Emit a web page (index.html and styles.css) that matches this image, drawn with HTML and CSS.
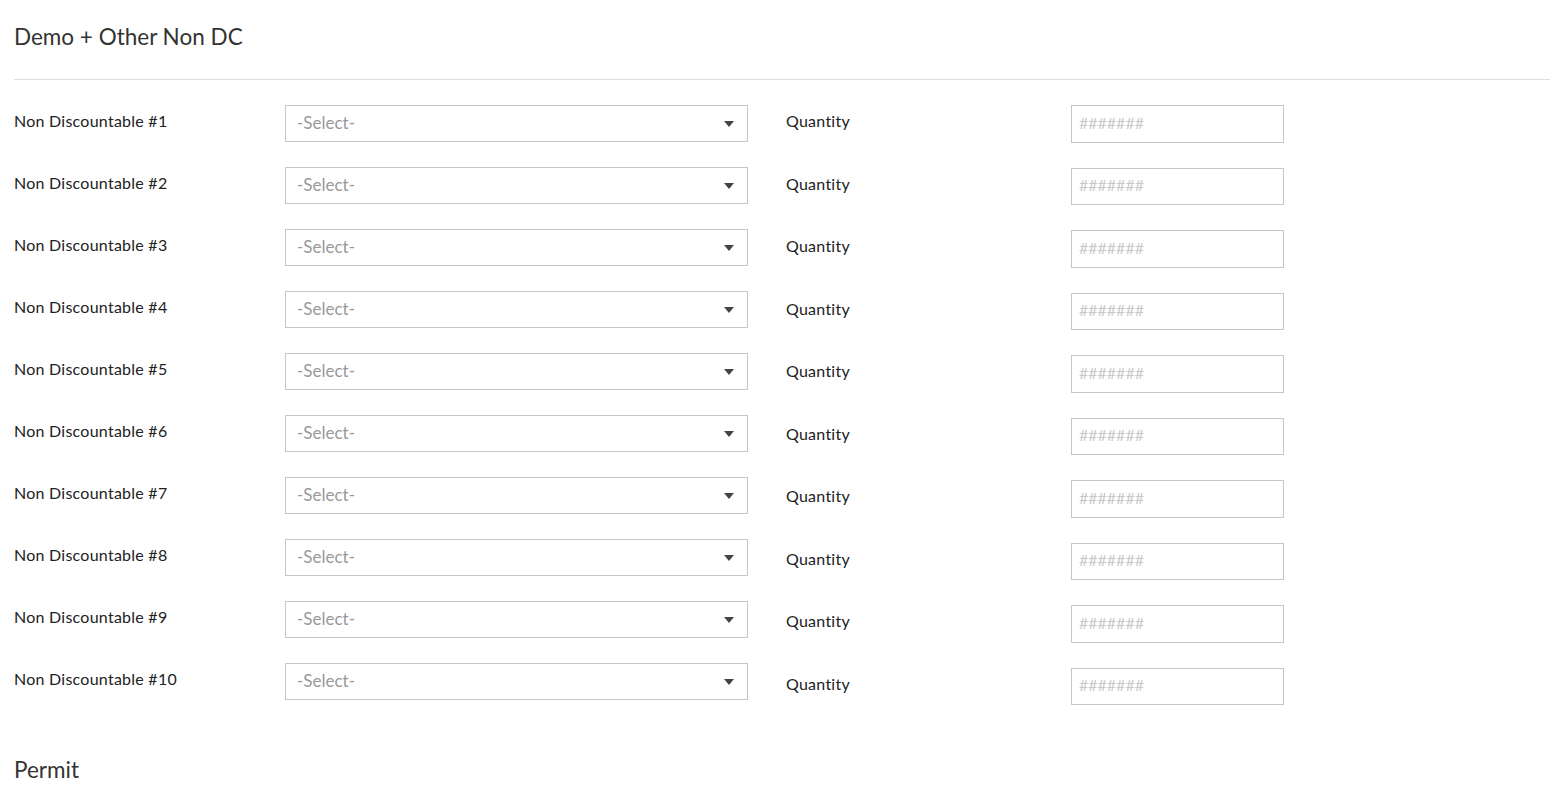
FILE: index.html
```html
<!DOCTYPE html>
<html>
<head>
<meta charset="utf-8">
<link rel="stylesheet" href="styles.css">
</head>
<body>
<div class="page">
  <h2 class="section-title">Demo + Other Non DC</h2>
  <div class="divider"></div>
  <div class="form">
    <div class="col col-left">
      <div class="row"><div class="label">Non Discountable #1</div><div class="select"><span>-Select-</span><i class="caret"></i></div></div>
      <div class="row"><div class="label">Non Discountable #2</div><div class="select"><span>-Select-</span><i class="caret"></i></div></div>
      <div class="row"><div class="label">Non Discountable #3</div><div class="select"><span>-Select-</span><i class="caret"></i></div></div>
      <div class="row"><div class="label">Non Discountable #4</div><div class="select"><span>-Select-</span><i class="caret"></i></div></div>
      <div class="row"><div class="label">Non Discountable #5</div><div class="select"><span>-Select-</span><i class="caret"></i></div></div>
      <div class="row"><div class="label">Non Discountable #6</div><div class="select"><span>-Select-</span><i class="caret"></i></div></div>
      <div class="row"><div class="label">Non Discountable #7</div><div class="select"><span>-Select-</span><i class="caret"></i></div></div>
      <div class="row"><div class="label">Non Discountable #8</div><div class="select"><span>-Select-</span><i class="caret"></i></div></div>
      <div class="row"><div class="label">Non Discountable #9</div><div class="select"><span>-Select-</span><i class="caret"></i></div></div>
      <div class="row"><div class="label">Non Discountable #10</div><div class="select"><span>-Select-</span><i class="caret"></i></div></div>
    </div>
    <div class="col col-right">
      <div class="row row-q"><div class="label qlabel">Quantity</div><input class="qty" type="text" placeholder="#######"></div>
      <div class="row row-q"><div class="label qlabel">Quantity</div><input class="qty" type="text" placeholder="#######"></div>
      <div class="row row-q"><div class="label qlabel">Quantity</div><input class="qty" type="text" placeholder="#######"></div>
      <div class="row row-q"><div class="label qlabel">Quantity</div><input class="qty" type="text" placeholder="#######"></div>
      <div class="row row-q"><div class="label qlabel">Quantity</div><input class="qty" type="text" placeholder="#######"></div>
      <div class="row row-q"><div class="label qlabel">Quantity</div><input class="qty" type="text" placeholder="#######"></div>
      <div class="row row-q"><div class="label qlabel">Quantity</div><input class="qty" type="text" placeholder="#######"></div>
      <div class="row row-q"><div class="label qlabel">Quantity</div><input class="qty" type="text" placeholder="#######"></div>
      <div class="row row-q"><div class="label qlabel">Quantity</div><input class="qty" type="text" placeholder="#######"></div>
      <div class="row row-q"><div class="label qlabel">Quantity</div><input class="qty" type="text" placeholder="#######"></div>
    </div>
  </div>
  <h2 class="section-title permit">Permit</h2>
</div>
</body>
</html>
```
FILE: styles.css
```css
html, body {
  margin: 0;
  padding: 0;
  background: #fff;
}
body {
  font-family: Lato, "Open Sans", sans-serif;
  color: #222;
  overflow: hidden;
  font-variant-ligatures: none;
}
.page {
  padding-left: 14px;
}
.section-title {
  margin: 0;
  font-weight: 400;
  font-size: 22.5px;
  line-height: 28px;
  color: #333;
  padding-top: 23px;
}
.divider {
  height: 1px;
  background: #dedede;
  margin-top: 28px;
}
.form {
  display: flex;
  margin-top: 25px;
}
.col {
  display: flex;
  flex-direction: column;
}
.row {
  display: flex;
  align-items: flex-start;
  height: 37px;
  margin-bottom: 25px;
}
.row-q {
  height: 37.5px;
}
.label {
  width: 271px;
  font-size: 16px;
  letter-spacing: 0.25px;
  line-height: 20px;
  padding-top: 6px;
  color: #222;
}
.qlabel {
  width: 285px;
}
.col-right {
  margin-left: 38px;
}
.select {
  box-sizing: border-box;
  width: 463px;
  height: 37px;
  border: 1px solid #c6c6c6;
  display: flex;
  align-items: center;
  justify-content: space-between;
  padding: 0 13px 0 11px;
  font-size: 17px;
  color: #999;
}
.select span {
  margin-top: -2px;
}
.caret {
  width: 0;
  height: 0;
  border-left: 5px solid transparent;
  border-right: 5px solid transparent;
  border-top: 6px solid #444;
}
.qty {
  box-sizing: border-box;
  width: 213px;
  height: 37.5px;
  border: 1px solid #c6c6c6;
  margin: 0;
  padding: 0 7px 3px;
  font-family: Lato, "Open Sans", sans-serif;
  font-size: 16px;
  color: #333;
  outline: none;
}
.qty::placeholder {
  color: #c8c8c8;
}
.permit {
  font-size: 22.5px;
  padding-top: 26px;
}
```
